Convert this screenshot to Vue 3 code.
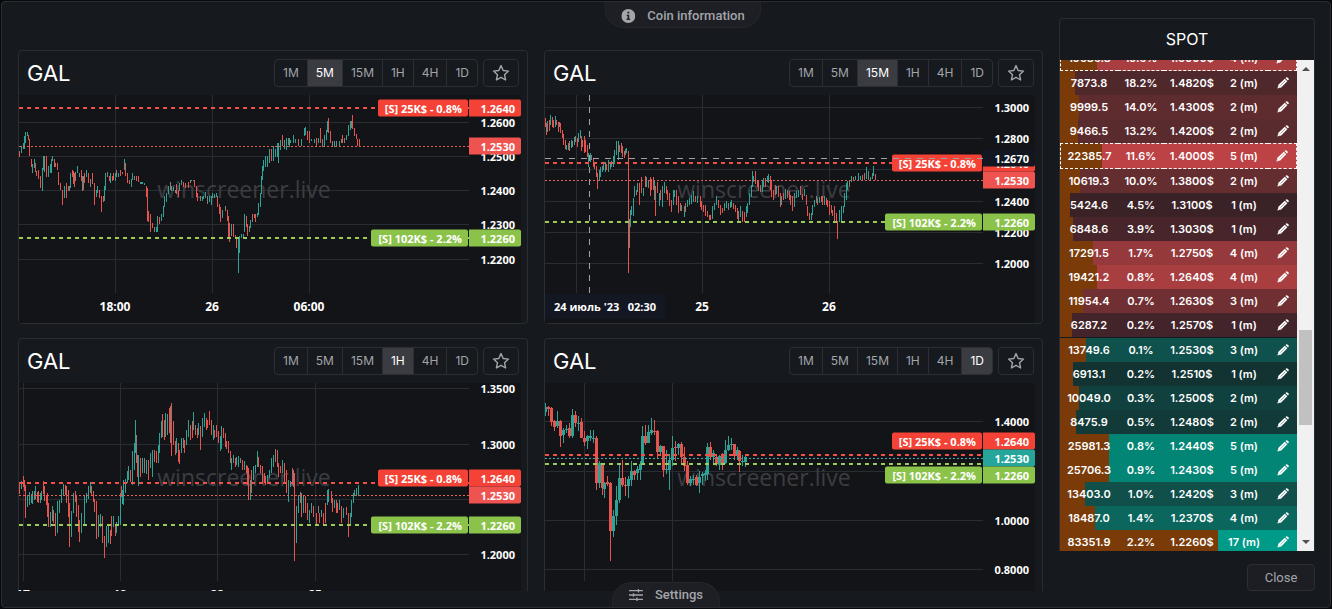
<script setup>
import { ref, onMounted } from 'vue'

const frames = ['1M', '5M', '15M', '1H', '4H', '1D']

// Candles are "x high low" plus a colour letter (r, g, n), sampled three times finer than the plot.
const parse = (text, ox, oy) =>
  text.split(',').map((item) => {
    const kind = item.slice(-1)
    const [x, high, low] = item.slice(0, -1).split(' ').map(Number)
    const y = Math.floor((high - oy) / 3)
    return { x: Math.floor((x - ox) / 3), y, h: Math.max(1, Math.round((low - oy) / 3) - y), w: 1, kind }
  })

// Wide candles also carry the open and close of the body.
const parseWide = (text, ox, oy) =>
  text.split(',').flatMap((item) => {
    const kind = item.slice(-1)
    const [x, high, low, open, close] = item.slice(0, -1).split(' ').map(Number)
    const px = Math.floor((x - ox) / 3)
    const row = (v) => Math.floor((v - oy) / 3)
    return [
      { x: px, y: row(high), h: Math.max(1, row(low) - row(high)), w: 1, kind },
      { x: px - 1, y: row(open), h: Math.max(1, row(close) - row(open)), w: 3, kind },
    ]
  })

const m5 = '28 185 200r,33 170 188g,39 160 178g,43 140 178g,47 126 160g,52 126 138g,55 136 150r,58 148 198r,64 207 230r,67 222 250g,74 207 235g,77 220 245r,80 245 258r,85 240 268r,91 260 294r,97 235 302g,100 198 240g,103 198 245n,109 198 262r,115 230 260g,121 222 250g,124 207 250g,128 198 212g,133 207 232r,137 220 230n,142 220 240r,146 248 285r,152 280 300r,158 300 345r,164 290 325g,168 290 325r,170 280 290r,176 290 303g,179 290 302r,182 250 295g,188 240 262r,191 245 282r,194 250 292r,197 248 272n,203 228 250g,209 250 262g,215 240 272r,218 258 302r,221 260 300g,224 250 280r,229 240 262g,235 250 280r,240 268 290n,246 250 282r,253 280 345r,259 300 322g,262 290 310g,268 300 325r,274 318 365r,280 318 335r,283 290 332g,286 250 300g,292 248 262n,298 258 272r,301 250 280g,307 260 272r,310 250 270r,316 250 272g,320 240 262n,325 250 262g,331 240 258r,337 248 252n,342 207 240g,346 220 258r,352 250 280r,358 270 282r,364 268 292g,367 250 270g,373 260 270n,379 258 272r,386 258 275r,391 278 282g,395 278 282g,398 278 282g,404 280 284g,409 290 322r,412 295 392r,415 365 395r,421 372 425r,427 400 415r,433 412 425n,438 412 425g,442 380 425g,448 382 402r,454 372 392g,460 350 382g,464 320 352g,468 310 335g,475 290 312g,481 278 300n,484 290 302n,490 292 302g,496 300 308n,499 282 312r,505 300 322r,508 280 302g,515 270 284g,520 278 290r,525 280 293r,535 278 293r,540 270 280n,545 270 273g,550 270 273g,553 270 292r,559 290 322r,563 310 332r,570 320 332n,576 322 332g,580 320 328g,585 308 325g,592 320 342n,598 320 335g,604 320 345g,608 310 325g,614 312 325g,619 310 322g,622 320 350r,628 342 372r,632 352 395r,638 362 385g,646 350 362n,652 362 392r,656 380 445r,659 400 456r,665 402 438g,670 402 440r,676 435 445r,680 445 475r,685 445 548g,688 440 488g,694 434 445g,700 432 445g,704 372 425g,709 380 412r,713 402 438r,718 408 425n,722 390 415g,726 372 395n,732 372 385r,737 372 395r,742 370 382g,746 340 374g,751 310 350g,755 260 312g,758 228 270g,761 210 242g,767 198 232g,773 198 232g,779 178 220g,785 178 212r,791 190 212g,797 178 200g,803 160 200g,806 182 220g,789 170 210g,795 178 202g,804 160 200g,810 150 180g,817 135 168r,823 150 178g,828 145 180g,834 145 165n,838 145 170g,842 150 160g,850 135 158g,856 148 160g,864 148 168r,875 148 168g,883 115 138g,887 113 135g,893 125 150r,899 125 160r,905 148 153g,912 148 158g,920 145 170r,926 145 158g,931 115 160r,937 148 170n,943 135 170g,948 120 150g,953 95 125g,956 84 130r,960 125 158r,967 155 170n,974 155 170g,980 155 168n,987 155 170g,993 148 160n,998 135 158r,1004 145 158n,1010 135 150g,1014 105 138g,1020 95 120g,1024 95 115n,1028 75 118r,1032 115 138r,1038 132 148r,1042 148 168r,1047 148 170r'
const m15 = '15 85 110r,19 100 135r,22 95 125g,27 90 122r,30 75 105g,36 82 112r,40 90 115r,45 80 110g,49 90 105r,54 98 125r,59 98 112n,62 100 130r,66 120 145r,70 132 165r,75 150 178r,79 165 180g,84 160 180g,88 155 182r,93 150 175g,97 155 172n,102 142 165g,106 140 155n,111 145 170r,115 130 155g,120 122 145g,124 140 182r,128 150 172r,132 140 190r,136 150 185r,141 165 200r,145 190 230g,150 190 215g,155 195 210n,159 205 230r,163 218 238r,168 230 262r,172 250 298r,177 240 272g,182 232 262g,187 230 245g,191 220 240n,196 218 245g,200 222 240r,205 212 245g,210 218 238n,215 215 232g,220 200 232g,224 182 222g,230 153 195g,234 153 210g,238 165 185r,243 160 190r,247 170 200r,252 185 205r,257 178 195g,260 175 190g,265 185 548r,268 388 474n,271 360 412g,275 350 375g,279 325 378g,284 290 320g,288 300 315n,293 280 305g,298 280 345r,304 262 310r,309 295 318g,316 258 290r,320 262 290g,325 270 295n,330 262 318r,334 268 300r,339 262 300r,343 270 330g,347 290 378r,353 278 310r,358 310 348g,362 300 330r,368 290 352g,373 276 310g,378 290 312r,382 300 330r,388 310 348r,394 330 365r,399 300 345g,404 300 320g,409 300 345r,414 320 370r,420 340 362r,425 345 362g,432 350 380g,437 340 365r,443 330 350g,448 325 345g,454 315 342g,460 305 335g,466 318 335r,472 320 340g,480 320 350r,485 335 360r,490 345 365r,496 345 378r,502 365 382r,507 375 390r,512 375 390r,518 350 388g,523 340 360g,530 320 345g,536 330 355r,541 345 375r,547 355 370r,553 340 362g,558 335 355g,564 340 360n,570 338 355g,575 330 350g,580 340 358r,585 345 365r,591 355 388r,596 365 392n,602 350 380g,607 365 395r,612 368 395r,618 348 382g,623 340 368g,628 310 345g,633 285 320g,637 245 292g,641 260 275g,646 243 282r,651 270 292r,656 275 302r,661 285 305n,666 275 305g,670 265 292g,676 265 290r,681 258 275g,686 252 278g,690 260 300r,694 270 320r,699 300 330r,705 285 315r,710 288 312g,715 288 320r,720 310 352r,725 320 345g,731 310 330r,736 298 328g,741 300 325n,747 305 330r,752 315 345r,757 320 362r,763 310 350g,768 305 325g,774 300 320g,781 290 315r,787 312 330r,793 298 318g,798 315 345r,803 350 378r,808 370 390r,813 370 390g,818 345 375g,822 330 350g,828 318 340g,833 325 345r,838 322 340g,843 318 335r,848 320 345r,853 320 345g,858 325 345r,863 330 350r,868 335 375r,873 345 370r,878 360 378r,883 350 395r,888 370 400r,892 395 447r,898 362 397g,904 350 395g,909 350 370g,914 310 350g,918 280 330g,922 275 300g,928 270 290n,934 258 275g,940 262 272r,947 258 270g,955 250 270g,961 260 270g,968 255 270r,974 250 270n,980 232 268g,985 245 270n,991 262 270g,996 250 268g,1000 228 258g,1006 252 270r'
const h1 = '28 340 372r,34 335 358g,40 320 350r,43 330 362r,46 345 443r,52 378 412g,58 368 405g,64 372 400g,67 365 402g,73 365 390n,77 348 388g,82 368 395r,86 365 400r,91 370 398g,95 365 390g,99 335 372r,103 350 392r,109 375 405r,113 370 440r,116 400 470r,121 428 470g,127 410 452g,131 420 460r,135 430 497r,142 393 488g,148 392 430g,154 358 398g,160 342 375g,166 345 375r,170 350 400r,174 360 440r,178 400 530r,184 425 500g,190 370 430g,196 365 395r,200 380 440r,205 405 485r,208 450 517r,214 430 490g,220 462 468g,223 380 465g,229 370 400g,235 350 388g,240 338 370g,245 350 375r,249 365 395r,254 388 425r,259 395 508r,265 435 500g,271 432 470g,277 440 520r,283 500 565r,289 470 530g,295 462 520g,300 480 522r,305 440 498r,310 440 470g,316 470 498r,320 458 490g,325 438 465g,331 370 465g,334 348 380r,338 360 402g,341 330 405g,346 328 368g,351 305 340g,356 290 330g,361 300 335r,366 245 345g,372 220 300g,376 150 250g,379 195 280n,383 255 320r,386 255 348g,391 265 320r,397 265 310g,402 265 310n,408 270 312g,415 270 330r,421 250 295g,427 242 320g,433 240 275r,438 245 280r,444 225 280g,448 190 250g,453 155 205g,457 132 200r,462 150 210r,466 130 200g,472 132 195g,478 115 190r,481 110 220n,485 100 258r,490 155 225r,495 215 255r,500 205 250g,505 220 275r,509 240 282r,514 205 250g,519 205 235n,524 210 250r,529 180 225g,535 150 200g,541 165 210r,546 155 205r,551 128 180g,555 165 195n,561 175 205r,566 160 195g,571 170 240r,577 145 200g,582 130 170g,588 145 180r,593 150 175r,598 125 165r,604 150 195r,609 165 210g,614 180 205r,620 165 200r,626 185 220r,630 200 242g,635 170 238g,640 175 205r,645 190 230r,650 215 238r,656 215 248r,660 245 280r,665 265 300g,670 255 280g,675 265 290r,680 262 285g,686 260 290g,691 265 280n,697 270 300r,702 275 300g,708 285 310r,713 290 345r,716 295 390r,721 330 390g,725 300 370r,730 290 330g,736 285 310g,741 245 290g,746 262 290r,751 285 310r,757 290 335r,762 310 340r,767 320 345r,773 315 340g,778 300 325g,784 265 310g,790 255 290g,797 237 275n,802 240 290r,806 280 320r,812 290 310r,817 270 310g,822 280 335r,828 300 370r,835 330 395g,840 335 350g,847 295 345r,850 300 350n,854 310 573r,859 410 520g,864 375 430g,870 368 400g,875 370 440r,880 380 430g,886 378 430r,892 400 450r,897 420 460g,905 400 430g,910 410 440r,918 430 462r,924 408 430n,929 430 458r,935 420 440g,941 430 462r,946 400 460r,951 362 405g,955 358 395g,963 365 400r,968 385 425r,973 390 415g,978 390 430r,983 400 430r,988 390 420g,995 410 460r,1000 415 445g,1008 412 435r,1015 430 502r,1020 430 465g,1024 390 440g,1029 370 400g,1034 360 378g,1040 355 375g,1046 345 378g'
const d1 = '16 100 138 112 128g,25 110 138 112 118r,34 112 170 116 158r,43 150 185 155 172r,52 125 175 155 170g,61 150 232 155 198r,70 175 220 180 195g,79 165 190 178 182g,88 160 205 175 198r,97 118 205 135 198g,106 125 172 135 160r,115 140 185 160 162g,124 145 205 158 205r,133 185 228 205 218r,142 195 238 200 215g,151 182 215 198 205g,160 182 220 204 208g,168 200 360 205 340r,177 275 355 280 340g,186 280 375 282 355r,194 338 385 340 358g,203 318 350 338 342r,212 338 573 340 485r,220 420 503 438 485g,229 350 465 392 438g,238 285 400 325 392g,247 270 352 325 345r,256 322 378 345 350r,265 320 385 328 350g,274 275 348 305 330g,283 300 330 305 315r,292 290 332 298 310g,301 275 330 282 300g,308 170 285 200 282g,317 165 225 198 220r,326 165 220 188 220g,335 145 195 182 190g,343 150 195 183 185r,352 182 265 185 248r,361 225 260 230 248g,370 228 322 230 300r,379 240 312 298 302g,388 252 362 270 300g,397 200 290 235 272g,406 215 275 232 236r,415 220 255 222 235g,424 218 280 222 262r,433 232 305 262 288r,442 275 345 285 340r,451 318 350 328 340g,460 315 345 328 332g,469 315 350 322 345r,477 305 370 322 340g,486 308 345 312 318g,495 300 335 310 315g,503 220 330 232 312g,512 218 270 232 262r,521 240 280 250 262g,530 255 290 262 282r,539 255 300 258 285g,548 250 300 258 282r,557 212 282 240 280g,566 200 245 225 240g,575 205 240 222 226g,584 222 270 222 258r,592 232 270 242 260g,599 240 308 245 275r,608 255 290 275 278g,617 255 292 262 278g'

const charts = [
  {
    frame: '5M', w: 450, candles: parse(m5, 27, 15),
    xs: [{ x: 96, t: '18:00' }, { x: 193, t: '26' }, { x: 290, t: '06:00' }],
    ys: [{ y: 27, t: '1.2600' }, { y: 61, t: '1.2500' }, { y: 95, t: '1.2400' }, { y: 129, t: '1.2300' }, { y: 164, t: '1.2200' }],
    red: 13, last: 51, green: 143, redTag: 13, lastTag: 51, greenTag: 143,
  },
  {
    frame: '15M', w: 438, candles: parse(m15, 15, 15),
    xs: [{ x: 31, t: '' }, { x: 157, t: '25' }, { x: 284, t: '26' }],
    ys: [{ y: 12, t: '1.3000' }, { y: 43, t: '1.2800' }, { y: 74, t: '' }, { y: 106, t: '1.2400' }, { y: 137, t: '1.2200' }, { y: 168, t: '1.2000' }],
    red: 68, last: 85, green: 127, redTag: 68, lastTag: 85, greenTag: 127,
    cross: { x: 44, y: 63, price: '1.2670', time: "24 июль '23\u00a0\u00a0 02:30" },
  },
  {
    frame: '1H', w: 450, candles: parse(h1, 27, 39),
    xs: [{ x: 4, t: '17' }, { x: 101, t: '19' }, { x: 198, t: '22' }, { x: 296, t: '25' }],
    ys: [{ y: 5, t: '1.3500' }, { y: 61, t: '1.3000' }, { y: 116, t: '' }, { y: 171, t: '1.2000' }],
    red: 100, last: 112, green: 142, redTag: 95, lastTag: 112, greenTag: 142,
  },
  {
    frame: '1D', w: 438, candles: parseWide(d1, 15, 39), up: true,
    xs: [{ x: 39, t: '' }, { x: 127, t: '' }],
    ys: [{ y: 38, t: '1.4000' }, { y: 88, t: '' }, { y: 137, t: '1.0000' }, { y: 186, t: '0.8000' }],
    red: 72, last: 75, green: 81, redTag: 58, lastTag: 75, greenTag: 92,
  },
]
const tint = { r: '#e5544f', g: '#2ea295', n: '#8b7d75' }

const rows = [
  ['19586.8', '19.6%', '1.5000$', '4 (m)', '#a83e40', 'marked'],
  ['7873.8', '18.2%', '1.4820$', '2 (m)', '#4f282c'],
  ['9999.5', '14.0%', '1.4300$', '2 (m)', '#5e2c2f'],
  ['9466.5', '13.2%', '1.4200$', '2 (m)', '#5a2b2e'],
  ['22385.7', '11.6%', '1.4000$', '5 (m)', '#bd4245', 'marked'],
  ['10619.3', '10.0%', '1.3800$', '2 (m)', '#642d30'],
  ['5424.6', '4.5%', '1.3100$', '1 (m)', '#3b2227'],
  ['6848.6', '3.9%', '1.3030$', '1 (m)', '#47252a'],
  ['17291.5', '1.7%', '1.2750$', '4 (m)', '#96393c'],
  ['19421.2', '0.8%', '1.2640$', '4 (m)', '#a83e40'],
  ['11954.4', '0.7%', '1.2630$', '3 (m)', '#702f32'],
  ['6287.2', '0.2%', '1.2570$', '1 (m)', '#43242a'],
  ['13749.6', '0.1%', '1.2530$', '3 (m)', '#0f514c', 'split'],
  ['6913.1', '0.2%', '1.2510$', '1 (m)', '#123331'],
  ['10049.0', '0.3%', '1.2500$', '2 (m)', '#11413e'],
  ['8475.9', '0.5%', '1.2480$', '2 (m)', '#113a38'],
  ['25981.3', '0.8%', '1.2440$', '5 (m)', '#038576'],
  ['25706.3', '0.9%', '1.2430$', '5 (m)', '#038576'],
  ['13403.0', '1.0%', '1.2420$', '3 (m)', '#104f4a'],
  ['18487.0', '1.4%', '1.2370$', '4 (m)', '#0b665e'],
  ['83351.9', '2.2%', '1.2260$', '17 (m)', '#009a88'],
]
const share = (amount) => `${Number(amount) / 1250}%`

const book = ref(null)
onMounted(() => {
  book.value.scrollTop = 15
})
</script>

<template>
  <main class="modal">
    <button class="tab tab-top" type="button">
      <svg width="14" height="14" viewBox="0 0 14 14" aria-hidden="true">
        <circle cx="7" cy="7" r="7" fill="#a3a5a9" />
        <path d="M5.4 5.7h2.5v4h.9v1.2H5.2V9.7h1V6.9h-.8zM6.1 2.8h1.8v1.8H6.1z" fill="#1d1f25" />
      </svg>
      Coin information
    </button>

    <section class="charts">
      <article v-for="c in charts" :key="c.frame" class="card">
        <header class="head">
          <h2>GAL</h2>
          <div class="frames">
            <button v-for="f in frames" :key="f" type="button" :class="{ on: f === c.frame }">{{ f }}</button>
          </div>
          <button class="star" type="button" aria-label="Favourite">
            <svg width="18" height="18" viewBox="0 0 18 18" fill="none" stroke="#a3a5a9" stroke-width="1.4" stroke-linejoin="round">
              <path d="M9 1.6l2.2 4.9 5.3.6-4 3.6 1.1 5.3L9 13.3 4.4 16l1.1-5.3-4-3.6 5.3-.6z" />
            </svg>
          </button>
        </header>
        <div class="chart">
          <div class="plot">
            <svg class="draw" :viewBox="`0 0 ${c.w} 198`" preserveAspectRatio="none" shape-rendering="crispEdges">
              <rect v-for="g in c.xs" :key="'x' + g.x" :x="g.x" y="0" width="1" height="198" fill="#2a2c33" />
              <rect v-for="g in c.ys" :key="'y' + g.y" x="0" :y="g.y" :width="c.w" height="1" fill="#2a2c33" />
            </svg>
            <span class="mark">winscreener.live</span>
            <svg class="draw" :viewBox="`0 0 ${c.w} 198`" preserveAspectRatio="none" shape-rendering="crispEdges">
              <rect v-for="(k, i) in c.candles" :key="i" :x="k.x" :y="k.y" :width="k.w" :height="k.h" :fill="tint[k.kind]" />
              <path :d="`M0 ${c.red}H${c.w}`" stroke="#f05045" stroke-width="2" stroke-dasharray="4 4" />
              <path :d="`M0 ${c.green}H${c.w}`" stroke="#9ccc55" stroke-width="2" stroke-dasharray="4 4" />
              <path :d="`M0 ${c.last + 0.5}H${c.w}`" :stroke="c.up ? '#3fa8a4' : '#e0605c'" stroke-dasharray="2 2" />
            </svg>
            <span class="tag red" :style="{ top: c.redTag + 'px' }">[S] 25K$ - 0.8%</span>
            <span class="tag green" :style="{ top: c.greenTag + 'px' }">[S] 102K$ - 2.2%</span>
            <svg v-if="c.cross" class="draw" :viewBox="`0 0 ${c.w} 198`" preserveAspectRatio="none" shape-rendering="crispEdges">
              <path :d="`M0 ${c.cross.y + 0.5}H${c.w}M${c.cross.x + 0.5} 0V198`" fill="none" stroke="#a0a2a8" stroke-dasharray="6 6" />
            </svg>
          </div>
          <div class="prices">
            <template v-for="g in c.ys" :key="g.y">
              <span v-if="g.t" class="price" :style="{ top: g.y + 'px' }">{{ g.t }}</span>
            </template>
            <span class="price red" :style="{ top: c.redTag + 'px' }">1.2640</span>
            <span v-if="c.cross" class="price cross" :style="{ top: c.cross.y + 'px' }">{{ c.cross.price }}</span>
            <span class="price" :class="c.up ? 'teal' : 'last'" :style="{ top: c.lastTag + 'px' }">1.2530</span>
            <span class="price green" :style="{ top: c.greenTag + 'px' }">1.2260</span>
          </div>
          <div class="times">
            <template v-for="g in c.xs" :key="g.x">
              <span v-if="g.t" class="time" :style="{ left: (g.x / c.w) * 100 + '%' }">{{ g.t }}</span>
            </template>
            <span v-if="c.cross" class="moment">{{ c.cross.time }}</span>
          </div>
        </div>
      </article>
    </section>

    <aside class="side">
      <section class="panel">
        <h3>SPOT</h3>
        <div class="body">
          <div ref="book" class="book">
            <table>
              <tbody>
                <tr v-for="r in rows" :key="r[0]" :class="r[5]" :style="{ '--share': share(r[0]), '--tone': r[4] }">
                  <td>{{ r[0] }}</td>
                  <td>{{ r[1] }}</td>
                  <td>{{ r[2] }}</td>
                  <td>{{ r[3] }}</td>
                  <td>
                    <button class="edit" type="button" aria-label="Edit">
                      <svg width="12" height="12" viewBox="0 0 12 12">
                        <path d="M8.4 1.1L9.2.4Q9.8-.1 10.4.4L11.6 1.6Q12.1 2.2 11.6 2.8L10.9 3.6zM7.8 1.7L10.3 4.2 4.2 10.6.4 11.6 1.4 7.8z" fill="#fff" />
                        <path d="M3.6 8.5l4.6-4.7M1.5 9.6l.9.9" stroke="var(--tone)" stroke-width=".5" />
                      </svg>
                    </button>
                  </td>
                </tr>
              </tbody>
            </table>
          </div>
          <div class="bar" aria-hidden="true">
            <i class="up"></i>
            <i class="thumb"></i>
            <i class="down"></i>
          </div>
        </div>
      </section>
      <button class="close" type="button">Close</button>
    </aside>

    <button class="tab tab-bottom" type="button">
      <svg width="14" height="12" viewBox="0 0 14 12" fill="none" stroke="#a3a5a9" stroke-width="1.3" aria-hidden="true">
        <path d="M0 1.7h14M0 6h14M0 10.3h14M9.5 0v3.4M4.5 4.3v3.4M8 8.6V12" />
      </svg>
      Settings
    </button>
  </main>
</template>

<style>
html,
body {
  background: #08090c;
}
</style>

<style scoped>
* {
  box-sizing: border-box;
}
button {
  margin: 0;
  padding: 0;
  border: 0;
  background: none;
  color: #a3a5a9;
  cursor: pointer;
}
.modal {
  position: relative;
  display: flex;
  gap: 16px;
  height: calc(100vh - 2px);
  margin: 1px 1px 0;
  padding: 0 15px 0 16px;
  border: 1px solid #2a2d32;
  border-radius: 4px;
  background: #16191e;
  overflow: hidden;
  font-family: Inter, 'Liberation Sans', sans-serif;
}
.tab {
  position: absolute;
  left: 50%;
  display: flex;
  align-items: center;
  background: #1d1f25;
  border: 1px solid #25272d;
  font: 500 13px/16px Roboto, sans-serif;
}
.tab-top {
  top: 0;
  height: 26px;
  padding: 2px 16px 0;
  gap: 12px;
  border-top: 0;
  border-radius: 0 0 20px 20px;
  transform: translateX(calc(-50% + 17px));
}
.tab-bottom {
  bottom: 0;
  height: 25px;
  padding: 0 16px;
  gap: 12px;
  border-bottom: 0;
  border-radius: 20px 20px 0 0;
  transform: translateX(-50%);
}
.charts {
  flex: 1;
  min-width: 0;
  display: grid;
  grid-template-columns: minmax(0, 510fr) minmax(0, 499fr);
  grid-auto-rows: 274px;
  gap: 14px 16px;
  margin: 48px 0 16px;
  overflow: hidden;
}
.card {
  border: 1px solid #2a2d32;
  border-radius: 4px;
}
.head {
  display: flex;
  align-items: center;
  height: 44px;
  padding: 0 8px;
  gap: 5px;
}
h2 {
  flex: 1;
  margin: 0;
  font-size: 22px;
  line-height: 28px;
  font-weight: 400;
  color: #fff;
}
.frames {
  display: flex;
  height: 28px;
  border: 1px solid #2b2e33;
  border-radius: 4px;
  overflow: hidden;
}
.frames button {
  padding: 0 8px;
  font: 400 12px/26px Inter, sans-serif;
}
.frames button + button {
  border-left: 1px solid #2b2e33;
}
.frames .on {
  background: #3a3c41;
  color: #fff;
}
.star {
  display: flex;
  align-items: center;
  justify-content: center;
  width: 36px;
  height: 28px;
  border: 1px solid #2b2e33;
  border-radius: 4px;
}
.chart {
  display: grid;
  grid-template-columns: minmax(0, 1fr) 52px;
  grid-template-rows: 198px 30px;
  margin-right: 6px;
  background: #131418;
  font: 700 11px/17px 'Open Sans', 'Noto Sans', sans-serif;
  color: #fff;
}
.card:nth-child(even) .chart {
  margin-right: 7px;
}
.plot,
.prices,
.times {
  position: relative;
}
.draw {
  position: absolute;
  inset: 0;
  width: 100%;
  height: 100%;
}
.mark {
  position: absolute;
  inset: 0;
  display: flex;
  align-items: center;
  justify-content: center;
  font-size: 23px;
  font-weight: 400;
  line-height: 28px;
  padding-bottom: 10px;
  color: #3c3d41;
}
.tag,
.price {
  position: absolute;
  height: 17px;
  transform: translateY(-50%);
  white-space: nowrap;
}
.tag {
  right: 1px;
  padding: 0 6px 0 7px;
  border-radius: 2px;
}
.price {
  left: 0;
  right: 0;
  padding-right: 6px;
  text-align: right;
  border-radius: 0 2px 2px 0;
}
.red {
  background: #f44336;
}
.green {
  background: #8bc34a;
}
.last {
  background: #ef5350;
}
.teal {
  background: #26a69a;
}
.cross {
  background: #131722;
}
.time {
  position: absolute;
  top: 5px;
  transform: translateX(-50%);
  font-size: 12px;
}
.moment {
  position: absolute;
  left: 0;
  top: 1px;
  padding: 5px 9px 4px;
  background: #131722;
  white-space: nowrap;
  line-height: 16px;
}
.side {
  display: flex;
  flex-direction: column;
  align-items: flex-end;
  gap: 13px;
  width: 256px;
  padding: 16px 0;
}
.panel {
  flex: 1;
  min-height: 0;
  width: 100%;
  display: flex;
  flex-direction: column;
  border: 1px solid #2a2d32;
  border-bottom: 0;
  border-radius: 4px 4px 0 0;
}
h3 {
  margin: 0;
  font-size: 16px;
  line-height: 41px;
  font-weight: 400;
  text-align: center;
  color: #fff;
}
.body {
  flex: 1;
  min-height: 0;
  display: flex;
}
.book {
  flex: 1;
  overflow: hidden;
}
table {
  width: 100%;
  border-collapse: separate;
  border-spacing: 0;
  table-layout: fixed;
  font-size: 11px;
  line-height: 14px;
  font-weight: 600;
  color: #fff;
}
tr {
  background: linear-gradient(90deg, #7a3b09 var(--share), var(--tone) var(--share));
}
td {
  height: 24px;
  padding: 0;
  text-align: center;
}
td:nth-child(1) {
  width: 58px;
}
td:nth-child(2) {
  width: 46px;
}
td:nth-child(3) {
  width: 56px;
}
td:nth-child(4) {
  width: 48px;
}
.marked td {
  height: 26px;
  border-top: 1px dashed #fff;
  border-bottom: 1px dashed #fff;
}
.marked td:first-child {
  border-left: 1px dashed #fff;
}
.marked td:last-child {
  border-right: 1px dashed #fff;
}
.split td {
  height: 25px;
  border-top: 1px solid #16191e;
}
.edit {
  display: block;
  margin: 0 auto;
}
.edit svg {
  display: block;
}
.bar {
  display: flex;
  flex-direction: column;
  align-items: center;
  width: 17px;
  padding: 7px 0;
  background: #f1f1f1;
}
.up,
.down {
  border: 4px solid transparent;
}
.up {
  border-top: 0;
  border-bottom-color: #505050;
}
.down {
  border-bottom: 0;
  border-top-color: #505050;
}
.thumb {
  width: 13px;
  height: 20%;
  margin: 259px 0 auto;
  background: #c1c1c1;
}
.close {
  width: 68px;
  height: 27px;
  border: 1px solid #2b2e33;
  border-radius: 4px;
  background: #1c1e23;
  font: 400 13px/16px Roboto, sans-serif;
}
</style>
